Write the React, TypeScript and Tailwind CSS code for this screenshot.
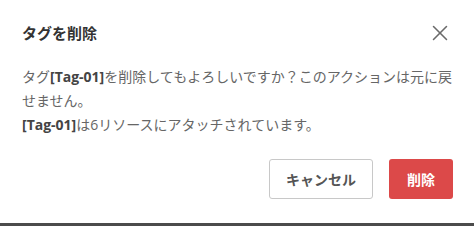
import { X } from "lucide-react";

export default function App() {
  return (
    <div
      className="w-[474px] h-[226px] flex flex-col bg-white"
      style={{ fontFamily: '"Open Sans", "Noto Sans CJK JP", sans-serif' }}
    >
      <div className="flex-1 px-[22px] pt-[22px]">
        {/* header */}
        <div className="flex items-center justify-between h-[22px]">
          <h2 className="text-[15px] font-bold text-[#333]">タグを削除</h2>
          <button className="-mr-[1px] text-[#6a6a6a]">
            <X className="w-[26px] h-[26px]" strokeWidth={1.4} />
          </button>
        </div>

        {/* body */}
        <div className="mt-[21px] -mr-[8px] text-[14px] leading-[24px] text-[#666]">
          <p>
            タグ<b className="text-[#444]">[Tag-01]</b>を削除してもよろしいですか？このアクションは元に戻せません。
          </p>
          <p>
            <b className="text-[#444]">[Tag-01]</b>は6リソースにアタッチされています。
          </p>
        </div>

        {/* actions */}
        <div className="flex justify-end gap-4 mt-[22px] -mr-[1px]">
          <button className="w-[104px] h-[40px] border border-[#c8c8c8] rounded-[3px] text-[14px] font-bold text-[#555] bg-white">
            キャンセル
          </button>
          <button className="w-[64px] h-[40px] rounded-[3px] text-[14px] font-bold text-white bg-[#dc4949]">
            削除
          </button>
        </div>
      </div>
      <div className="h-[3px] bg-[#4b4b4b]" />
    </div>
  );
}
